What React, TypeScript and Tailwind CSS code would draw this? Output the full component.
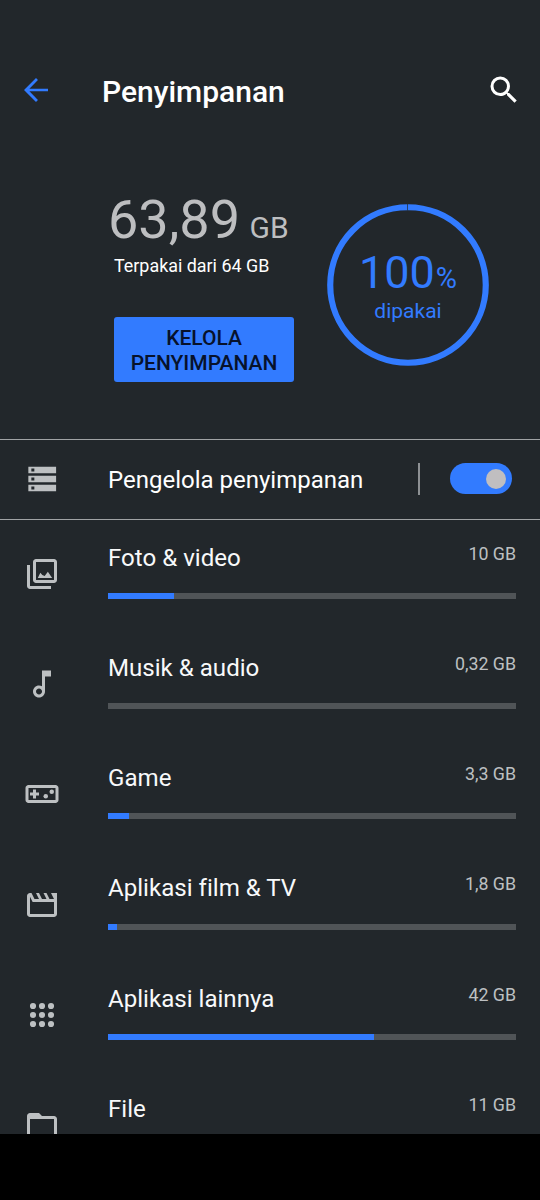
import type { ReactNode } from "react";

type Category = { name: string; size: string; fill: number; icon: ReactNode };

const Icon = ({ children }: { children: ReactNode }) => (
  <svg viewBox="0 0 24 24" className="size-9 shrink-0" fill="currentColor">
    {children}
  </svg>
);

const categories: Category[] = [
  {
    name: "Foto & video",
    size: "10 GB",
    fill: 66,
    icon: (
      <path d="M20 4v12H8V4h12m0-2H8c-1.1 0-2 .9-2 2v12c0 1.1.9 2 2 2h12c1.1 0 2-.9 2-2V4c0-1.1-.9-2-2-2zM12.2 12.6l-1.3-1.4L9.2 14.6h9.6l-2.9-4.1-2.1 2.9zM2 6v14c0 1.1.9 2 2 2h14v-2H4V6H2z" />
    ),
  },
  {
    name: "Musik & audio",
    size: "0,32 GB",
    fill: 0,
    icon: (
      <path d="M12 3l.01 10.55c-.59-.34-1.27-.55-2-.55C7.79 13 6 14.79 6 17s1.79 4 4.01 4S14 19.21 14 17V7h4V3h-6zm-1.99 16c-1.1 0-2-.9-2-2s.9-2 2-2 2 .9 2 2-.9 2-2 2z" />
    ),
  },
  {
    name: "Game",
    size: "3,3 GB",
    fill: 21,
    icon: (
      <>
        <path d="M21 6H3c-1.1 0-2 .9-2 2v8c0 1.1.9 2 2 2h18c1.1 0 2-.9 2-2V8c0-1.1-.9-2-2-2zm0 10H3V8h18v8zM6 15h2v-2h2v-2H8V9H6v2H4v2h2z" />
        <circle cx="14.5" cy="13.5" r="1.5" />
        <circle cx="18.5" cy="10.5" r="1.5" />
      </>
    ),
  },
  {
    name: "Aplikasi film & TV",
    size: "1,8 GB",
    fill: 8.5,
    icon: (
      <path d="M4 6.47L5.76 10H20v8H4V6.47M22 4h-4l2 4h-3l-2-4h-2l2 4h-3l-2-4H8l2 4H7L5 4H4c-1.1 0-1.99.9-1.99 2L2 18c0 1.1.9 2 2 2h16c1.1 0 2-.9 2-2V4z" />
    ),
  },
  {
    name: "Aplikasi lainnya",
    size: "42 GB",
    fill: 265.5,
    icon: (
      <>
        {[6, 12, 18].map((y) =>
          [6, 12, 18].map((x) => <circle key={`${x}-${y}`} cx={x} cy={y} r="2.05" />),
        )}
      </>
    ),
  },
  {
    name: "File",
    size: "11 GB",
    fill: 70,
    icon: (
      <path d="M20 6h-8l-2-2H4c-1.1 0-1.99.9-1.99 2L2 18c0 1.1.9 2 2 2h16c1.1 0 2-.9 2-2V8c0-1.1-.9-2-2-2zm0 12H4V8h16v10z" />
    ),
  },
];

function Header() {
  return (
    <header className="flex h-[180px] shrink-0 items-start pr-[18.5px] pl-[18px] pt-[72px]">
      <span className="text-[#327bff]">
        <Icon>
          <path d="M20 11.1H7.6l5.7-5.75L12 4l-8 8 8 8 1.3-1.35-5.7-5.75H20z" />
        </Icon>
      </span>
      <h1 className="ml-12 mt-0.5 flex-1 text-[30px] leading-9 font-medium text-white">
        Penyimpanan
      </h1>
      <Icon>
        <path d="M15.5 14h-.79l-.28-.27A6.47 6.47 0 0 0 16 9.5 6.5 6.5 0 1 0 9.5 16c1.61 0 3.09-.59 4.23-1.57l.27.28v.79l5 4.99L20.49 19l-4.99-5zm-6 0a4.5 4.5 0 1 1 0-9 4.5 4.5 0 0 1 0 9z" />
      </Icon>
    </header>
  );
}

function Summary() {
  return (
    <section className="flex h-[259px] shrink-0 items-start">
      <div className="flex w-[326.5px] flex-col pl-[108px] pt-[9.5px]">
        <div className="flex h-[60px] items-baseline gap-[9.5px] leading-[60px] whitespace-nowrap text-[#bdbec0]">
          <span className="text-[54px]">63,89</span>
          <span className="text-[30px]">GB</span>
        </div>
        <p className="ml-1.5 mt-1 text-[17.9px] leading-6 whitespace-nowrap text-white">
          Terpakai dari 64 GB
        </p>
        <button className="ml-1.5 mt-[39px] h-[65px] w-[180px] rounded-[3px] bg-[#327bff] pt-[3.5px] text-[21px] leading-[25px] font-medium text-[#07122b]">
          KELOLA PENYIMPANAN
        </button>
      </div>
      <div className="mt-[24px] grid size-[162px] place-items-center text-[#327bff]">
        <svg viewBox="0 0 163 163" className="col-start-1 row-start-1 size-full" fill="none">
          <circle cx="81.5" cy="81.5" r="78.25" stroke="currentColor" strokeWidth="6.2" />
          <path d="M81 0v6.5" stroke="#22272b" strokeWidth=".7" />
        </svg>
        <div className="col-start-1 row-start-1 flex flex-col items-center pt-[5px] pl-px">
          <div className="flex h-12 items-baseline gap-px leading-[48px]">
            <span className="text-[45px]">100</span>
            <span className="text-[29px]">%</span>
          </div>
          <span className="text-[21px] leading-[29px]">dipakai</span>
        </div>
      </div>
    </section>
  );
}

function ManagerRow() {
  return (
    <section className="flex h-[81px] shrink-0 items-center border-y border-[#a0a3a5] pb-0.5 pl-6 text-[#bdc0c2]">
      <Icon>
        <path d="M2.9 3.8h18.5v4.4H2.9zM2.9 9.8h18.5v4.4H2.9zM2.9 15.8h18.5v4.4H2.9z" />
        <path d="M4.9 5h2v2h-2zM4.9 11h2v2h-2zM4.9 17h2v2h-2z" fill="#22272b" />
      </Icon>
      <span className="ml-12 flex-1 pt-0.5 text-2xl text-white">Pengelola penyimpanan</span>
      <span className="h-8 w-[1.5px] bg-[#8d9093]" />
      <span className="mr-[28.5px] ml-[30.5px] flex h-[30.5px] w-[61.5px] items-center justify-end rounded-full bg-[#327bff] pr-1.5">
        <span className="size-5 rounded-full bg-[#c0bec0]" />
      </span>
    </section>
  );
}

function CategoryRow({ item }: { item: Category }) {
  return (
    <li className="flex h-[110.25px] shrink-0 items-start pr-6 pl-6 text-[#bdc0c2]">
      <div className="mt-[35.5px]">
        <Icon>{item.icon}</Icon>
      </div>
      <div className="ml-12 flex flex-1 flex-col">
        <div className="flex items-start justify-between">
          <span className="mt-[21.25px] text-[24.1px] leading-8 text-[#f8f9fa] [font-variant-ligatures:none]">
            {item.name}
          </span>
          <span className="mt-[21.25px] text-[17.8px] leading-6">{item.size}</span>
        </div>
        <div className="mt-[19.25px] h-1.5 w-[408px] bg-[#505457]">
          <div className="h-full bg-[#327bff]" style={{ width: item.fill }} />
        </div>
      </div>
    </li>
  );
}

export default function App() {
  return (
    <div className="h-[1200px] w-[540px] overflow-hidden bg-black font-['Roboto',sans-serif] text-white">
      <main className="flex h-[1134px] flex-col overflow-hidden bg-[#22272b]">
        <Header />
        <Summary />
        <ManagerRow />
        <ul className="flex flex-col pt-[0.4px]">
          {categories.map((item) => (
            <CategoryRow key={item.name} item={item} />
          ))}
        </ul>
      </main>
    </div>
  );
}
